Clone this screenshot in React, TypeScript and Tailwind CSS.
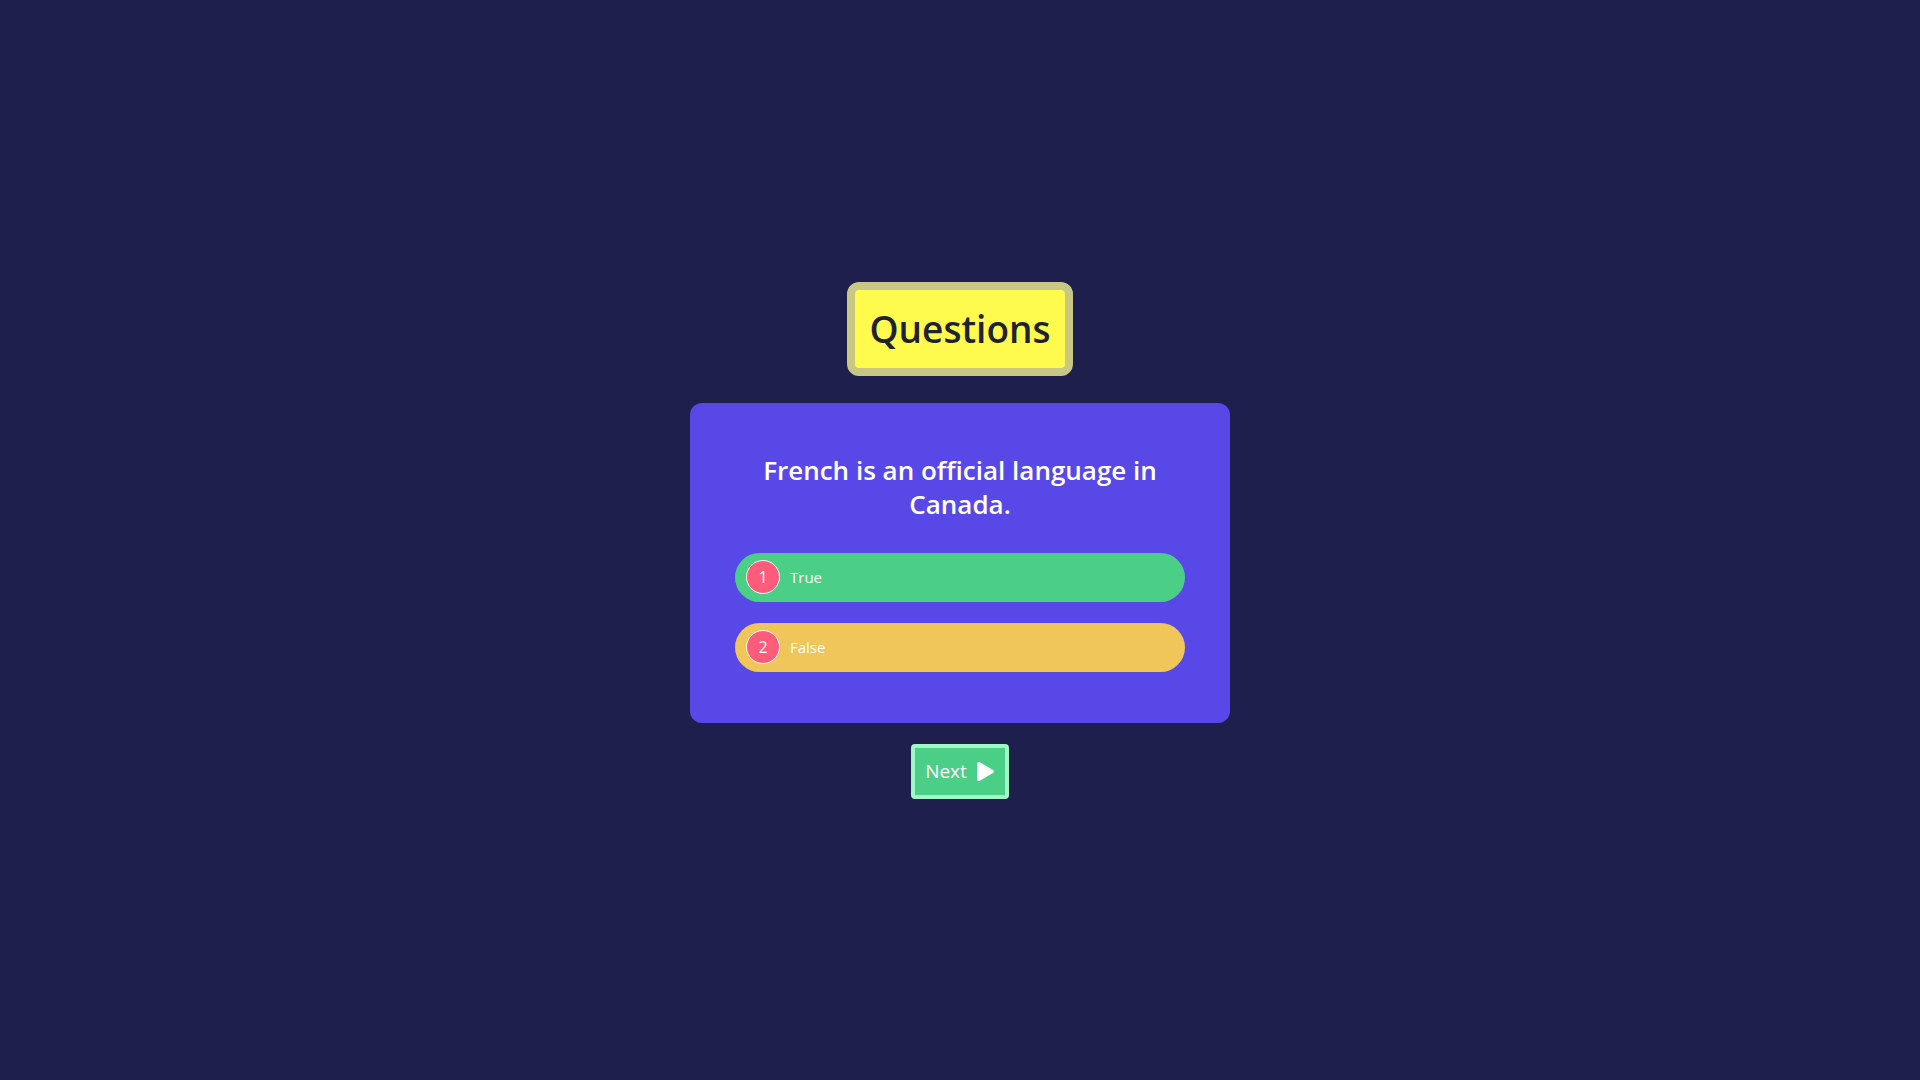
import { FaPlay } from 'react-icons/fa';

interface Option {
  id: number;
  label: string;
  color: string;
}

const options: Option[] = [
  { id: 1, label: 'True', color: 'bg-[#4bcf87]' },
  { id: 2, label: 'False', color: 'bg-[#f0c55a]' },
];

function OptionRow({ option }: { option: Option }) {
  return (
    <button
      className={`flex items-center h-[49px] w-full rounded-full pl-[11px] text-left ${option.color}`}
    >
      <span className="flex items-center justify-center w-[34px] h-[34px] rounded-full border border-white bg-[#ff5b7b] text-white text-[16px]">
        {option.id}
      </span>
      <span className="ml-[10px] text-white text-[15px]">{option.label}</span>
    </button>
  );
}

export default function App() {
  return (
    <div
      className="min-h-screen w-full bg-[#1e1f4d] flex flex-col items-center justify-center"
      style={{ fontFamily: '"Open Sans", "Noto Sans", sans-serif' }}
    >
      <div className="rounded-[12px] border-[8px] border-[#c9c785] bg-[#fffa4d]">
        <h1 className="px-[14px] py-[14px] text-[37px] leading-[50px] font-semibold text-[#1f2330]">
          Questions
        </h1>
      </div>

      <div className="mt-[27px] w-[540px] rounded-[12px] bg-[#5948e8] px-[45px] pt-[50px] pb-[51px]">
        <h2 className="text-center text-white text-[26px] leading-[34px] font-semibold">
          French is an official language in Canada.
        </h2>
        <div className="mt-[32px] flex flex-col gap-[21px]">
          {options.map(o => (
            <OptionRow key={o.id} option={o} />
          ))}
        </div>
      </div>

      <button className="mt-[21px] flex items-center gap-[9px] h-[55px] px-[10px] rounded-[4px] border-[4px] border-[#9ef7c5] bg-[#4bcf87] text-white text-[19px]">
        Next
        <FaPlay size={19} />
      </button>
    </div>
  );
}
